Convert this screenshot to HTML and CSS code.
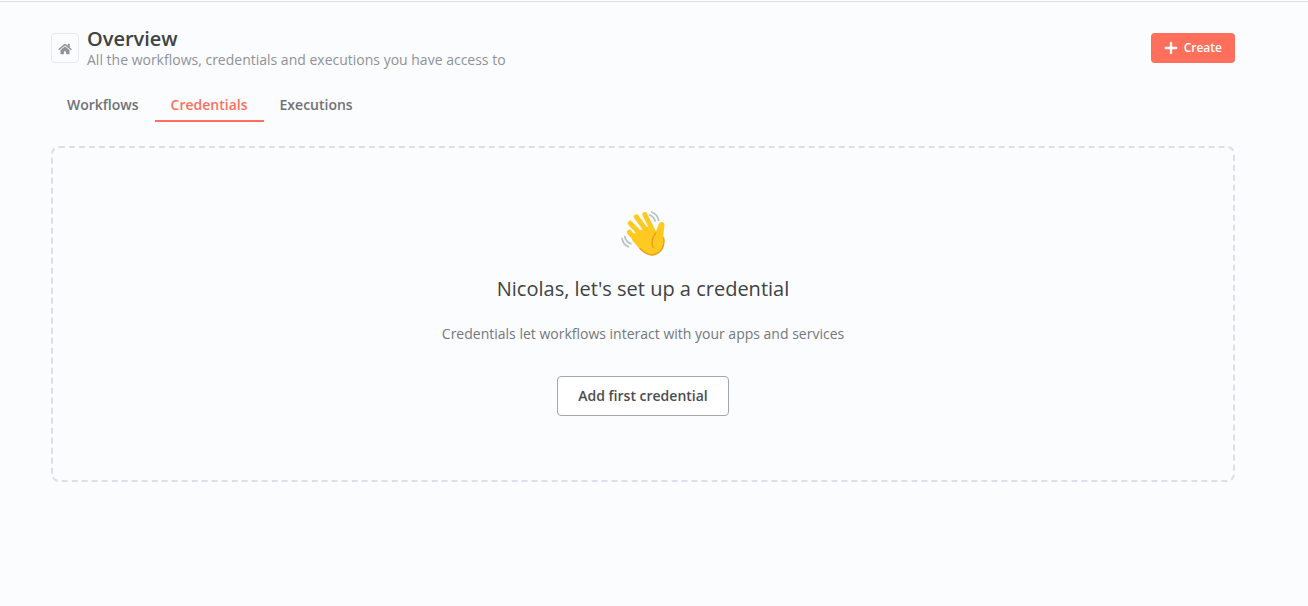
FILE: index.html
```html
<!DOCTYPE html>
<html lang="en">
<head>
<meta charset="utf-8">
<title>Overview</title>
<link rel="stylesheet" href="styles.css">
</head>
<body>
<main class="page">
  <header class="header">
    <div class="header-icon">
      <svg class="icon-home" viewBox="0 0 576 512" aria-hidden="true"><path d="M280.37 148.26L96 300.11V464a16 16 0 0 0 16 16l112.06-.29a16 16 0 0 0 15.92-16V368a16 16 0 0 1 16-16h64a16 16 0 0 1 16 16v95.64a16 16 0 0 0 16 16.05L464 480a16 16 0 0 0 16-16V300L295.67 148.26a12.19 12.19 0 0 0-15.3 0zM571.6 251.47L488 182.56V44.05a12 12 0 0 0-12-12h-56a12 12 0 0 0-12 12v72.61L318.47 43a48 48 0 0 0-61 0L4.34 251.47a12 12 0 0 0-1.6 16.9l25.5 31A12 12 0 0 0 45.15 301l235.22-193.74a12.19 12.19 0 0 1 15.3 0L530.9 301a12 12 0 0 0 16.9-1.6l25.5-31a12 12 0 0 0-1.7-16.93z"/></svg>
    </div>
    <div class="header-text">
      <h1 class="title">Overview</h1>
      <p class="subtitle">All the workflows, credentials and executions you have access to</p>
    </div>
    <button class="create" type="button">
      <svg class="icon-plus" viewBox="0 0 14 14" aria-hidden="true"><path d="M7 2.800v10.400M1.800 8h10.400"/></svg>
      Create
    </button>
  </header>
  <nav class="tabs">
    <a class="tab" href="#workflows">Workflows</a>
    <a class="tab tab-active" href="#credentials" aria-current="page">Credentials</a>
    <a class="tab" href="#executions">Executions</a>
  </nav>
  <section class="empty">
    <svg class="wave" viewBox="7 7 47 47" role="img" aria-label="Waving hand">
      <g class="motion">
        <path d="M36.5 12C39.500 13 41.300 15 42 18M38.800 9.200C42.500 10.500 45 13.500 45.600 17.500M11.800 33.500C12.500 37 14.500 39.500 18 40.700M9 35.500C9.800 39.500 12 42.500 15.500 43.700"/>
      </g>
      <path class="palm" d="M20 31L36 23L42.700 29L45.500 21.500C47 17.500 52.200 18.500 51.400 23L50.300 32C52.500 42 50.500 46.500 46 50C40 54.200 33.500 52.500 27 46.500L19 37Z"/>
      <path class="fingers" d="M16.300 29.200L29 43.500M17.200 20.200L32 36M23.300 13.800L36 31M31.800 11.500L40.500 29"/>
      <path class="thumb-line" d="M42.800 30C39.500 34 37.500 38.500 40 44.500M50.800 35C52 44 47 51.500 39 52C35 52 31 49.500 27 45.500"/>
    </svg>
    <h2 class="empty-title">Nicolas, let's set up a credential</h2>
    <p class="empty-text">Credentials let workflows interact with your apps and services</p>
    <button class="add" type="button">Add first credential</button>
  </section>
</main>
</body>
</html>
```
FILE: styles.css
```css
* {
  box-sizing: border-box;
}

body {
  margin: 0;
  background: #fbfcfe;
  color: #414244;
  font-family: "Open Sans", "Noto Sans", sans-serif;
  font-size: 14px;
}

.page {
  margin-top: 1px;
  padding: 25px 73px 32px 51px;
  border-top: 1px solid #dbdfe7;
}

.header {
  display: flex;
  align-items: center;
  gap: 8px;
}

.header-icon {
  display: flex;
  align-items: center;
  justify-content: center;
  width: 28px;
  height: 30px;
  padding-top: 2px;
  border: 1px solid #e6e9f0;
  border-radius: 4px;
}

.icon-home {
  width: 14px;
  height: 12px;
  fill: #909399;
}

.header-text {
  flex: 1;
}

.title,
.subtitle,
.empty-title,
.empty-text {
  margin: 0;
}

.title {
  font-size: 20px;
  font-weight: 600;
  line-height: 24px;
}

.subtitle {
  color: #909298;
  line-height: 18px;
}

.create {
  display: flex;
  align-items: center;
  justify-content: center;
  gap: 6px;
  height: 30px;
  padding: 0 13px 2px;
  border: 0;
  border-radius: 4px;
  background: #ff6f5c;
  color: #fff;
  font: 600 12px "Open Sans", "Noto Sans", sans-serif;
}

.icon-plus {
  width: 14px;
  height: 14px;
  fill: none;
  stroke: #fff;
  stroke-width: 2.3;
  stroke-linecap: round;
}

.tabs {
  display: flex;
  margin-top: 26px;
}

.tab {
  padding: 0 16px 5px;
  border-bottom: 2px solid transparent;
  color: #6f7178;
  font-weight: 600;
  line-height: 20px;
  text-decoration: none;
}

.tab-active {
  border-color: #ff6f5c;
  color: #ff6f5c;
}

.empty {
  display: flex;
  flex-direction: column;
  align-items: center;
  margin-top: 24px;
  padding: 62px 48px 64px;
  border: 2px dashed #dadfe9;
  border-radius: 8px;
}

.wave {
  width: 47px;
  height: 47px;
}

.motion,
.fingers,
.thumb-line {
  fill: none;
  stroke-linecap: round;
}

.motion {
  stroke: #b5bfc7;
  stroke-width: 1.7;
}

.palm {
  fill: #fec921;
}

.fingers {
  stroke: #fec921;
  stroke-width: 5;
}

.thumb-line {
  stroke: #f09a1c;
  stroke-width: 1.3;
}

.empty-title {
  margin-top: 19px;
  font-size: 20px;
  font-weight: 400;
  line-height: 26px;
}

.empty-text {
  margin-top: 22px;
  color: #75777d;
  line-height: 20px;
}

.add {
  height: 40px;
  margin-top: 32px;
  padding: 0 20px 2px;
  border: 1px solid #a3a6b5;
  border-radius: 4px;
  background: #fff;
  color: #4c4d50;
  font: 600 14px "Open Sans", "Noto Sans", sans-serif;
}
```
